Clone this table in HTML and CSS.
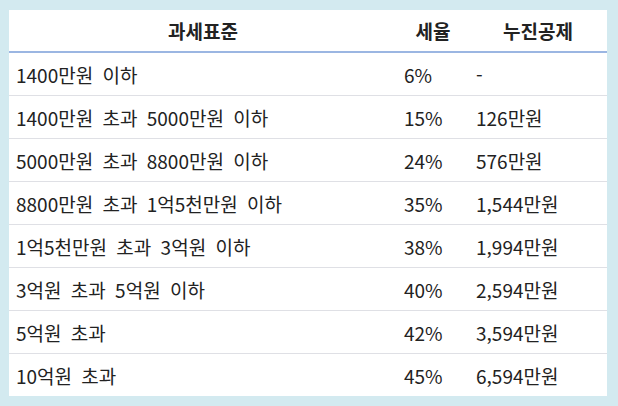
FILE: index.html
```html
<!DOCTYPE html>
<html lang="ko">
<head>
<meta charset="utf-8">
<link rel="stylesheet" href="styles.css">
</head>
<body>
<div class="frame">
  <table class="tax">
    <colgroup>
      <col class="c1"><col class="c2"><col class="c3">
    </colgroup>
    <thead>
      <tr><th>과세표준</th><th>세율</th><th>누진공제</th></tr>
    </thead>
    <tbody>
      <tr><td>1400만원 이하</td><td>6%</td><td>-</td></tr>
      <tr><td>1400만원 초과 5000만원 이하</td><td>15%</td><td>126만원</td></tr>
      <tr><td>5000만원 초과 8800만원 이하</td><td>24%</td><td>576만원</td></tr>
      <tr><td>8800만원 초과 1억5천만원 이하</td><td>35%</td><td>1,544만원</td></tr>
      <tr><td>1억5천만원 초과 3억원 이하</td><td>38%</td><td>1,994만원</td></tr>
      <tr><td>3억원 초과 5억원 이하</td><td>40%</td><td>2,594만원</td></tr>
      <tr><td>5억원 초과</td><td>42%</td><td>3,594만원</td></tr>
      <tr><td>10억원 초과</td><td>45%</td><td>6,594만원</td></tr>
    </tbody>
  </table>
</div>
</body>
</html>
```

FILE: styles.css
```css
html, body {
  margin: 0;
  padding: 0;
  background: #d3eaf0;
}
.frame {
  padding: 10px 11px 9px 9px;
  width: 618px;
  height: 406px;
  box-sizing: border-box;
}
.tax {
  width: 598px;
  border-collapse: collapse;
  background: #fff;
  font-family: "Noto Sans CJK KR", "Noto Sans", sans-serif;
  font-size: 19px;
  color: #222;
}
.c1 { width: 388px; }
.c2 { width: 72px; }
.c3 { width: 138px; }
.tax th {
  height: 42px;
  padding: 0 7px;
  font-weight: 700;
  text-align: center;
  border-bottom: 2px solid #9bb6e2;
  box-sizing: border-box;
}
.tax td {
  height: 42px;
  padding: 0 7px;
  text-align: left;
  border-bottom: 1px solid #dfe0e5;
  white-space: nowrap;
  word-spacing: 4px;
}
.tax tbody tr:last-child td {
  border-bottom: none;
}
```
